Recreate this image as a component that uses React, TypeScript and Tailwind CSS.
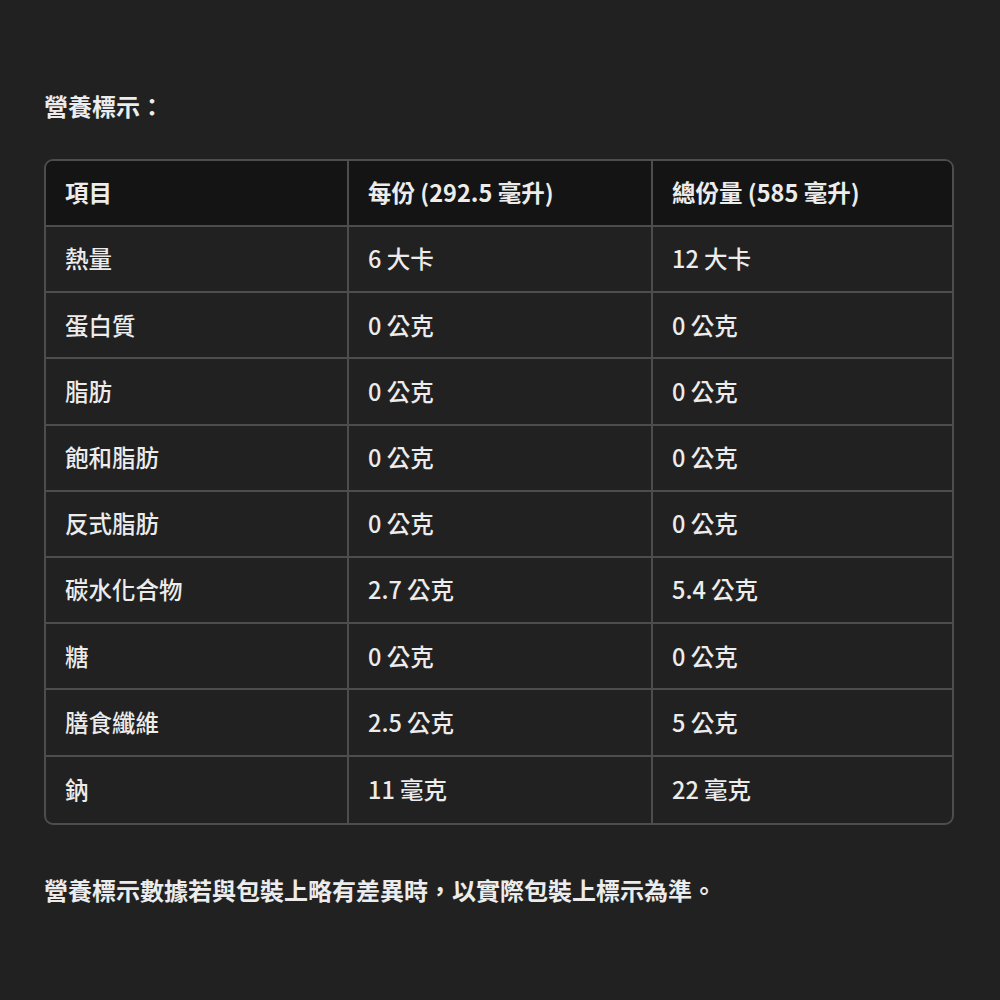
import React from "react";

const rows: [string, string, string][] = [
  ["熱量", "6 大卡", "12 大卡"],
  ["蛋白質", "0 公克", "0 公克"],
  ["脂肪", "0 公克", "0 公克"],
  ["飽和脂肪", "0 公克", "0 公克"],
  ["反式脂肪", "0 公克", "0 公克"],
  ["碳水化合物", "2.7 公克", "5.4 公克"],
  ["糖", "0 公克", "0 公克"],
  ["膳食纖維", "2.5 公克", "5 公克"],
  ["鈉", "11 毫克", "22 毫克"],
];

const font = {
  fontFamily: '"Noto Sans CJK TC", "Noto Sans", sans-serif',
};

export default function App() {
  return (
    <div
      className="w-[1000px] h-[1000px] bg-[#212121] text-[#ececec] pl-[44px] pr-[46px] pt-[88px]"
      style={font}
    >
      <div className="text-[24px] font-bold leading-[36px] h-[36px]">營養標示：</div>
      <div className="mt-[35px] rounded-[9px] border-2 border-[#4d4d4d] overflow-hidden">
        <div className="grid grid-cols-[303px_304px_1fr] bg-[#141414] h-[66px] border-b-2 border-[#4d4d4d] text-[23.5px] font-bold">
          <div className="flex items-center pl-[19px] border-r-2 border-[#4d4d4d]">項目</div>
          <div className="flex items-center pl-[19px] border-r-2 border-[#4d4d4d]">每份 (292.5 毫升)</div>
          <div className="flex items-center pl-[19px]">總份量 (585 毫升)</div>
        </div>
        {rows.map((r, i) => (
          <div
            key={i}
            className={
              "grid grid-cols-[303px_304px_1fr] h-[66.2px] text-[23.5px] font-medium " +
              (i < rows.length - 1 ? "border-b-2 border-[#4d4d4d]" : "")
            }
          >
            <div className="flex items-center pl-[19px] border-r-2 border-[#4d4d4d]">{r[0]}</div>
            <div className="flex items-center pl-[19px] border-r-2 border-[#4d4d4d]">{r[1]}</div>
            <div className="flex items-center pl-[19px]">{r[2]}</div>
          </div>
        ))}
      </div>
      <div className="mt-[47px] text-[24px] font-bold leading-[36px]">
        營養標示數據若與包裝上略有差異時，以實際包裝上標示為準。
      </div>
    </div>
  );
}
